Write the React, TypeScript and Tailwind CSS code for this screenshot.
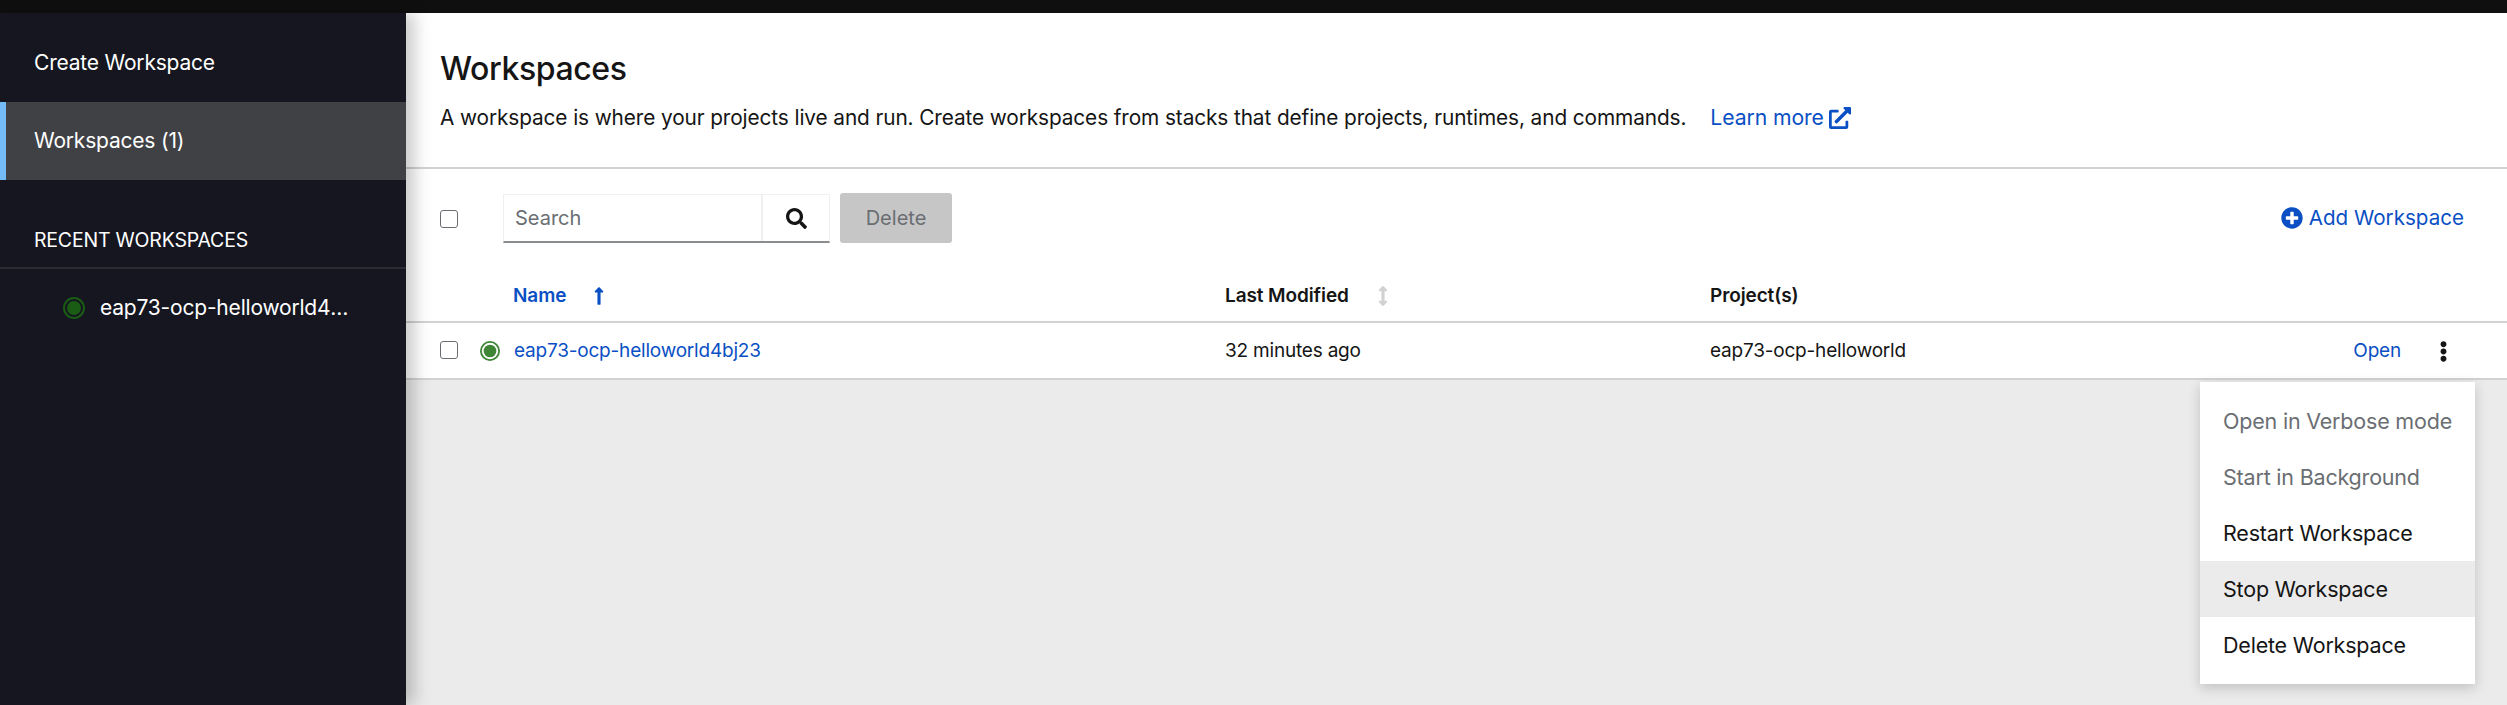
import { FaArrowsAltV, FaEllipsisV, FaExternalLinkAlt, FaLongArrowAltUp, FaPlusCircle, FaSearch } from "react-icons/fa";

function StatusDot({ ring, dot, size }: { ring: string; dot: string; size: number }) {
  return (
    <svg width={size} height={size} viewBox="0 0 22 22" className="shrink-0">
      <circle cx="11" cy="11" r="10" fill="none" stroke={ring} strokeWidth="2" />
      <circle cx="11" cy="11" r="7" fill={dot} />
    </svg>
  );
}

function RowCheckbox({ className = "" }: { className?: string }) {
  return (
    <input
      type="checkbox"
      className={`h-[18px] w-[18px] shrink-0 appearance-none rounded-[3px] border-[1.5px] border-[#6a6e73] bg-white ${className}`}
    />
  );
}

const menuItems = [
  { label: "Open in Verbose mode", className: "text-[#6a6e73]" },
  { label: "Start in Background", className: "text-[#6a6e73]" },
  { label: "Restart Workspace", className: "text-[#151515]" },
  { label: "Stop Workspace", className: "bg-[#ebebeb] text-[#151515]" },
  { label: "Delete Workspace", className: "text-[#151515]" },
];

export default function App() {
  return (
    <div className="flex h-[705px] flex-col overflow-hidden bg-[#ebebeb] font-['Inter',sans-serif] text-[20px] text-[#151515]">
      <div className="h-[13px] shrink-0 bg-[#0f0f0f]" />

      <div className="flex min-h-0 flex-1">
        {/* Sidebar */}
        <aside className="relative z-10 w-[406px] shrink-0 bg-[#151620] pt-[11px] text-white shadow-[8px_0_16px_rgba(0,0,0,0.22)]">
          <div className="flex h-[78px] items-center pl-[34px] text-[21px] tracking-[-0.2px]">Create Workspace</div>
          <div className="flex h-[78px] items-center border-l-[6px] border-[#73bcf7] bg-[#404145] pl-[28px] text-[21px] tracking-[-0.2px]">
            Workspaces (1)
          </div>
          <div className="mt-[42px] flex h-[47px] items-center border-b-2 border-[#2b2c33] pl-[34px] pb-[8px] text-[19.5px] tracking-[-0.2px]">
            RECENT WORKSPACES
          </div>
          <div className="mt-[23px] flex items-center gap-[15px] pl-[63px]">
            <StatusDot ring="#1a5c14" dot="#1a5c14" size={22} />
            <span className="w-[252px] truncate text-[21px] tracking-[-0.2px]">eap73-ocp-helloworld4bj23</span>
          </div>
        </aside>

        {/* Main */}
        <main className="relative min-w-0 flex-1">
          <div className="bg-white">
            <header className="h-[156px] border-b-2 border-[#d2d2d2] pl-[34px] pt-[33px]">
              <h1 className="text-[32px] font-medium leading-[46px] tracking-[-0.4px]">Workspaces</h1>
              <div className="mt-[10px] flex items-center text-[20.8px] tracking-[-0.1px]">
                <span>A workspace is where your projects live and run. Create workspaces from stacks that define projects, runtimes, and commands.</span>
                <a className="ml-[24px] flex items-center gap-[5px] text-[21.2px] text-[#0a50c4]">
                  Learn more
                  <FaExternalLinkAlt className="h-[22px] w-[22px]" />
                </a>
              </div>
            </header>

            <div className="flex h-[74px] items-end pl-[34px] pr-[43px]">
              <div className="flex h-[49px] w-full items-center">
                <RowCheckbox />
                <div className="ml-[45px] flex h-[49px] w-[327px] border border-b-2 border-[#f0f0f0] border-b-[#8a8d90]">
                  <div className="flex w-[259px] items-center border-r-2 border-[#f0f0f0] pl-[11px] text-[#6a6e73]">Search</div>
                  <div className="flex flex-1 items-center justify-center">
                    <FaSearch className="h-[21px] w-[21px] text-[#151515]" />
                  </div>
                </div>
                <div className="mb-[2px] ml-[10px] flex h-[50px] w-[112px] items-center justify-center rounded-[3px] bg-[#c6c6c6] text-[#6a6e73]">Delete</div>
                <a className="ml-auto flex items-center gap-[6px] text-[20.6px] text-[#0a50c4]">
                  <FaPlusCircle className="h-[22px] w-[22px]" />
                  Add Workspace
                </a>
              </div>
            </div>

            <div className="flex h-[78px] items-center pl-[107px] pt-[28px] text-[19px] font-semibold tracking-[-0.1px]">
              <div className="flex w-[712px] items-center text-[#0a50c4]">
                Name
                <FaLongArrowAltUp className="ml-[23px] h-[20px] w-[20px]" />
              </div>
              <div className="flex w-[485px] items-center">
                Last Modified
                <FaArrowsAltV className="ml-[24px] h-[20px] w-[20px] text-[#d2d2d2]" />
              </div>
              <div>Project(s)</div>
            </div>

            <div className="flex h-[59px] items-center border-y-2 border-[#d2d2d2] pl-[34px] pr-[53px] pt-[1px] text-[19px] tracking-[-0.2px]">
              <RowCheckbox className="mb-[3px]" />
              <div className="ml-[22px]">
                <StatusDot ring="#3e8635" dot="#3e8635" size={20} />
              </div>
              <a className="ml-[14px] w-[711px] text-[#0a50c4]">eap73-ocp-helloworld4bj23</a>
              <div className="w-[485px]">32 minutes ago</div>
              <div>eap73-ocp-helloworld</div>
              <a className="ml-auto text-[#0a50c4]">Open</a>
              <FaEllipsisV className="ml-[32px] h-[21px] w-[21px] text-[#151515]" />
            </div>
          </div>

          {/* Kebab menu */}
          <div className="absolute left-[1794px] top-[369px] w-[275px] bg-white py-[11px] text-[21.5px] tracking-[-0.2px] shadow-[0_4px_12px_rgba(3,3,3,0.18)]">
            {menuItems.map((item) => (
              <div key={item.label} className={`flex h-[56px] items-center pl-[23px] ${item.className}`}>
                {item.label}
              </div>
            ))}
          </div>
        </main>
      </div>
    </div>
  );
}
